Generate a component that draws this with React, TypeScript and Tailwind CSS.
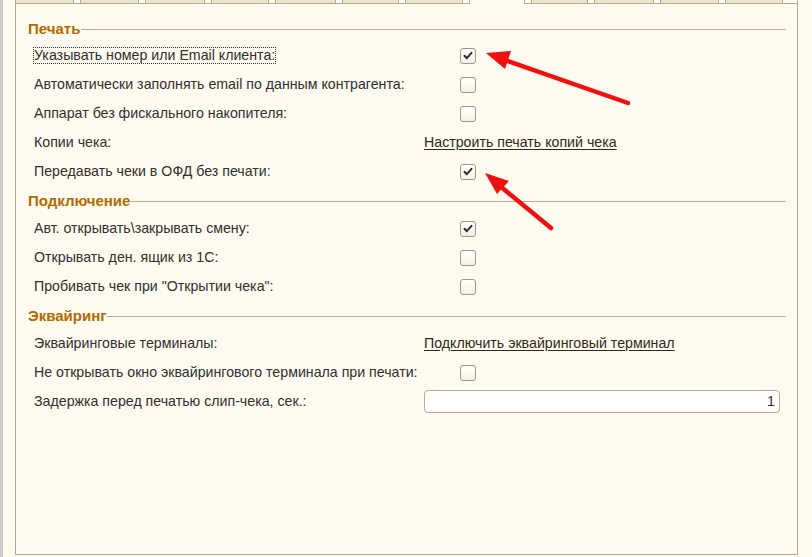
import React from "react";

const tabs: { w: number; active?: boolean }[] = [
  { w: 59 },
  { w: 59 },
  { w: 60 },
  { w: 58 },
  { w: 61 },
  { w: 57 },
  { w: 58 },
  { w: 56, active: true },
  { w: 57 },
  { w: 60 },
  { w: 59 },
  { w: 58 },
];

function Checkbox({ checked }: { checked?: boolean }) {
  return (
    <div className="ml-[36px] w-[16px] h-[16px] rounded-[3px] border-[1.5px] border-[#9f9880] bg-gradient-to-b from-[#ffffff] to-[#f4f1e6] flex items-center justify-center">
      {checked && (
        <svg width="10" height="9" viewBox="0 0 10 9">
          <path d="M1.5 4.8 L3.8 7.2 L8.5 1.8" fill="none" stroke="#2f2f2f" strokeWidth="2" strokeLinecap="round" strokeLinejoin="round" />
        </svg>
      )}
    </div>
  );
}

function Header({ title, h }: { title: string; h: string }) {
  return (
    <div className={`flex items-center pl-[12px] pr-[11px] ${h}`}>
      <span className="font-bold text-[15px] text-[#b06a00] leading-none">{title}</span>
      <div className="flex-1 h-px bg-[#b8ae88] ml-[1px] mt-[2px]" />
    </div>
  );
}

function Row({ label, children, focused }: { label: string; children?: React.ReactNode; focused?: boolean }) {
  return (
    <div className="flex items-center h-[29px] pl-[18px]">
      <div className="w-[390px] shrink-0">
        <span className={focused ? "outline outline-1 outline-dotted outline-[#333] leading-[15px] inline-block" : "leading-[15px]"}>
          {label}
        </span>
      </div>
      <div className="flex-1 flex items-center">{children}</div>
    </div>
  );
}

function Link({ text }: { text: string }) {
  return <span className="underline underline-offset-[2px] text-[#2e2a20] cursor-pointer">{text}</span>;
}

export default function App() {
  return (
    <div
      className="w-[812px] h-[557px] flex bg-[#fffaef] text-[14.2px] text-[#303030] relative overflow-hidden"
      style={{ fontFamily: '"Liberation Sans", Arial, sans-serif' }}
    >
      <div className="w-[3px] bg-[#c9c9c9] shrink-0" />
      <div className="flex-1 flex flex-col pl-[12px] pr-[14px] pb-[2px]">
        <div className="flex h-[4px] shrink-0">
          {tabs.map((t, i) => (
            <React.Fragment key={i}>
              {t.active ? (
                <div className="border-x border-[#b3ab88] bg-[#fffaef]" style={{ width: t.w }} />
              ) : (
                <div className="border-x border-b border-[#b3ab88] bg-[#ebe5cb]" style={{ width: t.w }} />
              )}
              {i < tabs.length - 1 && <div className="w-[6px] bg-white border-b border-[#b3ab88]" />}
            </React.Fragment>
          ))}
          <div className="flex-1 border-b border-r border-[#b3ab88]" />
        </div>
        <div className="flex-1 border-x border-b border-[#b3ab88] pt-[11px] flex flex-col">
          <Header title="Печать" h="h-[26px]" />
          <Row label="Указывать номер или Email клиента:" focused>
            <Checkbox checked />
          </Row>
          <Row label="Автоматически заполнять email по данным контрагента:">
            <Checkbox />
          </Row>
          <Row label="Аппарат без фискального накопителя:">
            <Checkbox />
          </Row>
          <Row label="Копии чека:">
            <Link text="Настроить печать копий чека" />
          </Row>
          <Row label="Передавать чеки в ОФД без печати:">
            <Checkbox checked />
          </Row>
          <Header title="Подключение" h="h-[28px]" />
          <Row label="Авт. открывать\закрывать смену:">
            <Checkbox checked />
          </Row>
          <Row label="Открывать ден. ящик из 1С:">
            <Checkbox />
          </Row>
          <Row label={'Пробивать чек при "Открытии чека":'}>
            <Checkbox />
          </Row>
          <Header title="Эквайринг" h="h-[28px]" />
          <Row label="Эквайринговые терминалы:">
            <Link text="Подключить эквайринговый терминал" />
          </Row>
          <Row label="Не открывать окно эквайрингового терминала при печати:">
            <Checkbox />
          </Row>
          <Row label="Задержка перед печатью слип-чека, сек.:">
            <div className="w-[356px] h-[23px] rounded-[4px] border border-[#b5ad8d] bg-white flex items-center justify-end pr-[4px]">
              1
            </div>
          </Row>
        </div>
      </div>

      <svg className="absolute inset-0 pointer-events-none" width="812" height="557" viewBox="0 0 812 557">
        <line x1="628" y1="103" x2="505" y2="60" stroke="#f01010" strokeWidth="4.5" strokeLinecap="round" />
        <polygon points="486,53 511,51 505,69" fill="#f01010" />
        <line x1="551" y1="228" x2="500" y2="186" stroke="#f01010" strokeWidth="4.5" strokeLinecap="round" />
        <polygon points="485,173 509,181 497,194" fill="#f01010" />
      </svg>
    </div>
  );
}
